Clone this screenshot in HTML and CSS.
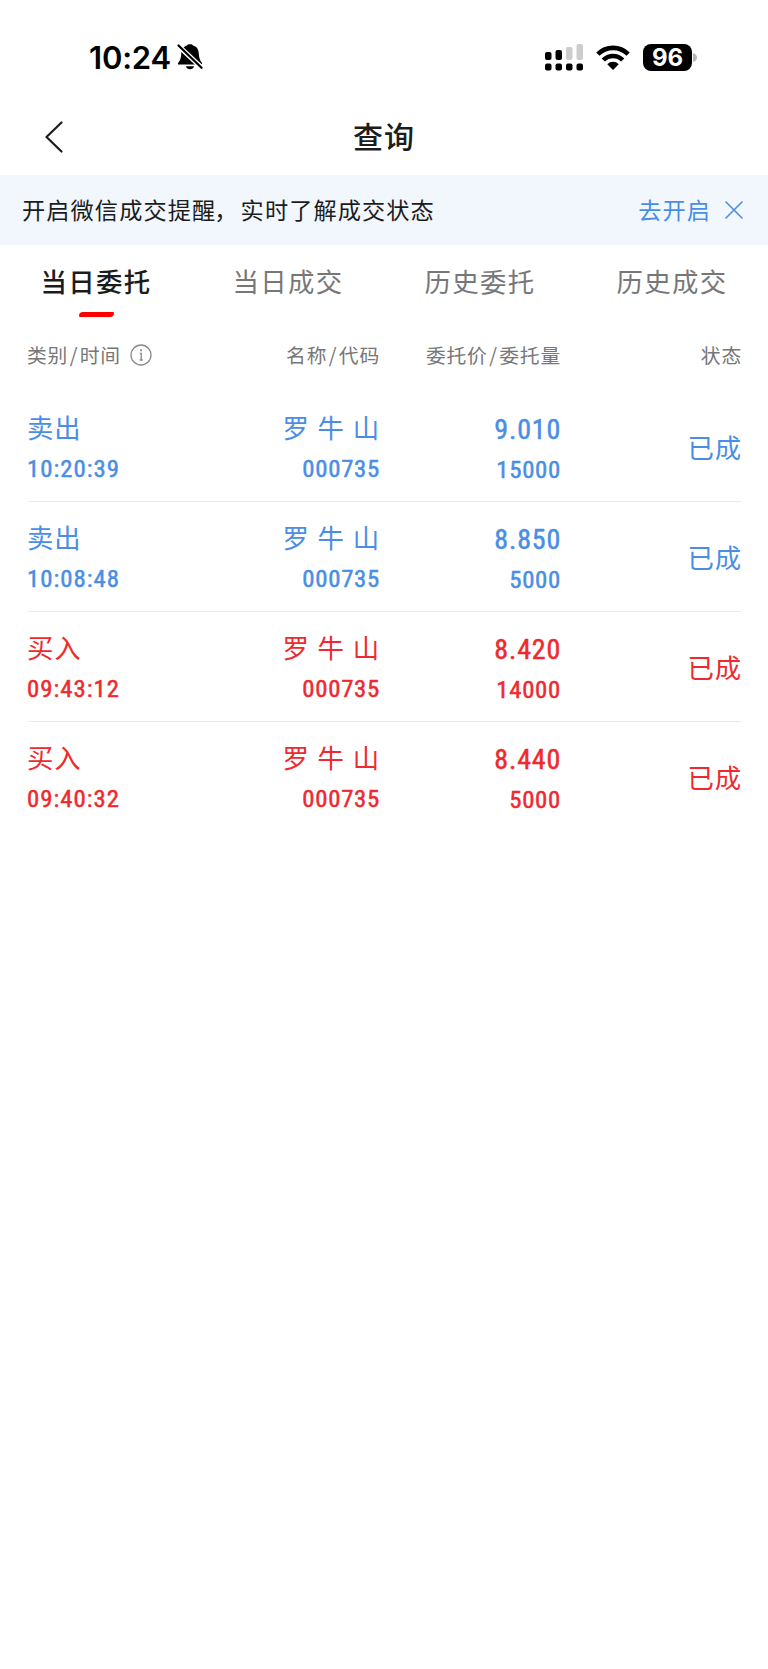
FILE: index.html
```
<!DOCTYPE html>
<html lang="zh-CN">
<head>
<meta charset="UTF-8">
<meta name="viewport" content="width=device-width, initial-scale=1.0">
<title>查询</title>
<link rel="stylesheet" href="styles.css">
</head>
<body>

<!-- 状态栏 -->
<div class="statusbar">
  <span class="clock">10:24</span>
  <svg class="bell" width="26" height="28" viewBox="0 0 26 28">
    <path d="M1 21.5V20C3.6 17.4 4 14.500 4.300 10.500C4.600 6 7 3.200 10 2.500C10.300 .8 15.700 .8 16 2.500C19.500 3.300 21.600 6 21.800 10.500C22 14.500 22.800 17.400 25 20V21.500Z"/>
    <path d="M9 23.200H17C16.500 27.200 9.500 27.200 9 23.200Z"/>
    <path d="M1 2.500L25 25" stroke="#fff" stroke-width="5"/>
    <path d="M1.500 2.500L24.500 24.800" stroke="#000" stroke-width="2.200" stroke-linecap="round"/>
  </svg>
  <div class="status-right">
    <svg width="38" height="27" viewBox="0 0 38 27">
      <rect x="0" y="8" width="6.500" height="8" rx="2"/>
      <rect x="10.500" y="6" width="6.500" height="10" rx="2"/>
      <rect x="21" y="3" width="6.500" height="13" rx="2" fill="#ccc"/>
      <rect x="31.500" y="0" width="6.500" height="16" rx="2" fill="#ccc"/>
      <rect x="0" y="19.500" width="6.500" height="7" rx="2"/>
      <rect x="10.500" y="19.500" width="6.500" height="7" rx="2"/>
      <rect x="21" y="19.500" width="6.500" height="7" rx="2"/>
      <rect x="31.500" y="19.500" width="6.500" height="7" rx="2"/>
    </svg>
    <svg class="wifi" width="34" height="25" viewBox="0 0 34 25" fill="none" stroke="#000" stroke-width="4.600">
      <path d="M1.800 9.200A21.500 21.500 0 0 1 32.200 9.200"/>
      <path d="M7.300 15A13.700 13.700 0 0 1 26.700 15"/>
      <path d="M17 25L11.300 19.200A8 8 0 0 1 22.700 19.200Z" fill="#000" stroke="none"/>
    </svg>
    <div class="battery">96</div>
    <svg class="battery-cap" width="4" height="9" viewBox="0 0 4 9"><path d="M0 0Q4 1.500 4 4.500T0 9Z" fill="#b5b5b5"/></svg>
  </div>
</div>

<!-- 标题 -->
<div class="navbar">
  <svg class="back" width="18" height="32" viewBox="0 0 18 32" fill="none" stroke="#1c1c1c" stroke-width="2.200" stroke-linecap="round" stroke-linejoin="round">
    <path d="M16.500 1.500L1.500 16L16.500 30.500"/>
  </svg>
  <h1>查询</h1>
</div>

<!-- 提醒 -->
<div class="notice">
  <span>开启微信成交提醒<i>，</i>实时了解成交状态</span>
  <a class="open">去开启</a>
  <svg width="18" height="18" viewBox="0 0 18 18" fill="none" stroke="#4a8ee4" stroke-width="1.600" stroke-linecap="round">
    <path d="M1 1L17 17M17 1L1 17"/>
  </svg>
</div>

<div class="tabs">
  <div class="tab active">当日委托</div>
  <div class="tab">当日成交</div>
  <div class="tab">历史委托</div>
  <div class="tab">历史成交</div>
</div>

<!-- 委托列表 -->
<div class="list">
  <div class="row head">
    <div class="kind">类别<i>/</i>时间
      <svg width="22" height="22" viewBox="0 0 22 22" fill="none" stroke="#8a8a8a" stroke-width="1.300">
        <circle cx="11" cy="11" r="10"/>
        <path d="M9.800 9.500H11.200V16M9.600 16H12.800"/>
        <circle cx="11" cy="6.300" r=".5" fill="#8a8a8a"/>
      </svg>
    </div>
    <div>名称<i>/</i>代码</div>
    <div>委托价<i>/</i>委托量</div>
    <div>状态</div>
  </div>
  <div class="row sell">
    <div class="kind"><p class="name">卖出</p><p class="num">10:20:39</p></div>
    <div><p class="name">罗 牛 山</p><p class="num">000735</p></div>
    <div><p class="price">9.010</p><p class="num">15000</p></div>
    <div class="state">已成</div>
  </div>
  <div class="row sell">
    <div class="kind"><p class="name">卖出</p><p class="num">10:08:48</p></div>
    <div><p class="name">罗 牛 山</p><p class="num">000735</p></div>
    <div><p class="price">8.850</p><p class="num">5000</p></div>
    <div class="state">已成</div>
  </div>
  <div class="row buy">
    <div class="kind"><p class="name">买入</p><p class="num">09:43:12</p></div>
    <div><p class="name">罗 牛 山</p><p class="num">000735</p></div>
    <div><p class="price">8.420</p><p class="num">14000</p></div>
    <div class="state">已成</div>
  </div>
  <div class="row buy">
    <div class="kind"><p class="name">买入</p><p class="num">09:40:32</p></div>
    <div><p class="name">罗 牛 山</p><p class="num">000735</p></div>
    <div><p class="price">8.440</p><p class="num">5000</p></div>
    <div class="state">已成</div>
  </div>
</div>

</body>
</html>
```
FILE: styles.css
```
* {
  box-sizing: border-box;
}

body {
  margin: 0;
  background-color: #fff;
  color: #1c1c1c;
  font-family: "Noto Sans CJK SC", sans-serif;
}

p, h1 {
  margin: 0;
}

/* 状态栏 */
.statusbar {
  display: flex;
  align-items: center;
  height: 100px;
  padding: 14px 71px 0 89px;
  color: #000;
}

.clock {
  font-family: Inter, sans-serif;
  font-size: 31px;
  font-weight: 600;
  letter-spacing: -0.2px;
}

.bell {
  margin-left: 6px;
}

.status-right {
  display: flex;
  align-items: center;
  margin-left: auto;
}

.wifi {
  margin-left: 13px;
}

.battery {
  width: 49px;
  height: 27px;
  margin-left: 13px;
  border-radius: 8px;
  background-color: #000;
  color: #fff;
  font: 700 24px/27px Inter, sans-serif;
  text-align: center;
}

.battery-cap {
  margin-left: 1px;
}

/* 标题 */
.navbar {
  display: flex;
  align-items: center;
  height: 75px;
  padding: 0 45px 2px;
}

.navbar h1 {
  flex: 1;
  margin: 0 18px 4px 0;
  font-size: 30px;
  font-weight: 500;
  letter-spacing: 1px;
  text-align: center;
}

/* 提醒 */
.notice {
  display: flex;
  align-items: center;
  height: 70px;
  padding: 0 25px 0 22px;
  background-color: #f2f7fe;
  font-size: 23.2px;
  letter-spacing: 1.1px;
}

.notice i {
  margin: 0 2px 0 -2px;
  font-style: normal;
}

.notice span, .open {
  padding-bottom: 3px;
}

.open {
  margin: 0 14px 0 auto;
  color: #4a8ee4;
}

/* 标签 */
.tabs {
  display: flex;
  height: 75px;
}

.tab {
  position: relative;
  flex: 1;
  color: #777;
  font-size: 26.400px;
  line-height: 71px;
  letter-spacing: 1.3px;
  text-align: center;
}

.tab.active {
  color: #1c1c1c;
  font-weight: 500;
}

.tab.active::after {
  content: "";
  position: absolute;
  left: 79px;
  bottom: 3px;
  width: 35px;
  height: 5px;
  border-radius: 4px 1px 4px 1px;
  background-color: #f00;
}

/* 列表 */
.list {
  padding: 0 27px 0 28px;
}

.row {
  display: grid;
  grid-template-columns: 170px 181px 181px 181px;
  height: 110px;
  padding-top: 16px;
  border-bottom: 1px solid #ebebeb;
  font-size: 26.400px;
  line-height: 40px;
  letter-spacing: 0.8px;
  text-align: right;
}

.row:last-child {
  border-bottom: none;
}

/* 抵消末尾的字间距 */
.row > div {
  margin-right: -1px;
}

.row .kind {
  margin-left: -1px;
  text-align: left;
}

.row.head {
  height: 72px;
  padding-top: 15px;
  border-bottom: none;
  color: #777;
  font-size: 19.800px;
  line-height: 40px;
}

.head .kind {
  display: flex;
  align-items: center;
  height: 40px;
}

.head i {
  padding: 0 1.5px;
  font-style: normal;
}

.head svg {
  margin-left: 9px;
}

.sell {
  color: #4a8ee4;
}

.buy {
  color: #ee2a2e;
}

.num, .price {
  font-family: Roboto, sans-serif;
  font-weight: 400;
  font-stretch: 87%;
  -webkit-text-stroke: 0.5px currentColor;
}

.num {
  font-size: 24.8px;
  letter-spacing: 0.7px;
}

.kind .num {
  letter-spacing: 1px;
}

.price {
  padding-top: 2px;
  font-size: 28px;
}

.name {
  height: 41px;
  line-height: 37px;
  word-spacing: 1.3px;
}

.state {
  line-height: 77px;
}
```
